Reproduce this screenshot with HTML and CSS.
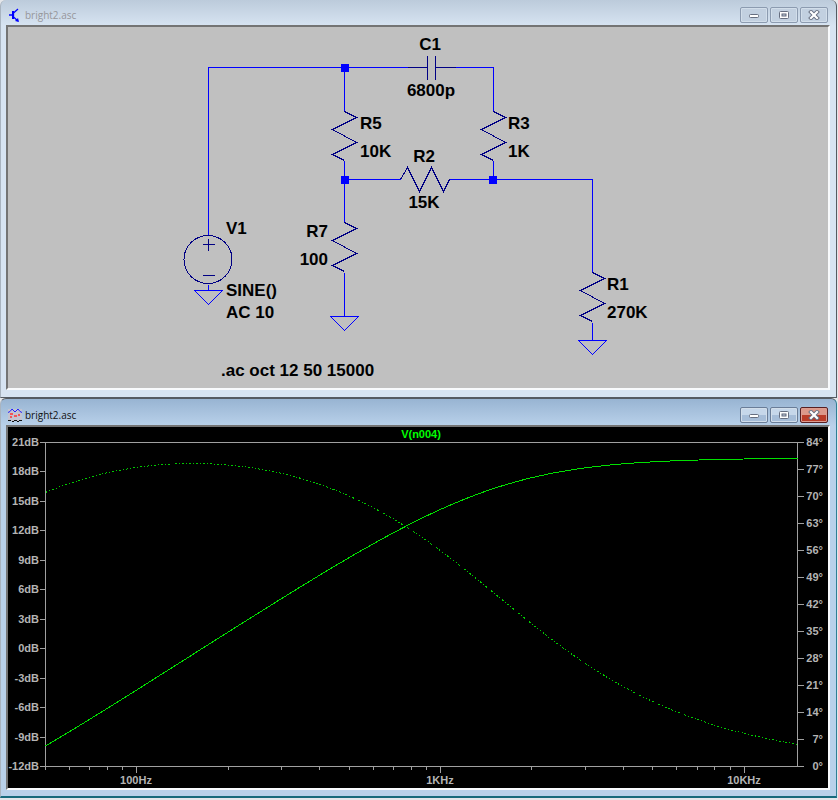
FILE: index.html
```html
<!DOCTYPE html>
<html lang="en">
<head>
<meta charset="utf-8">
<title>bright2.asc</title>
<link rel="stylesheet" href="styles.css">
</head>
<body>
<svg class="defs" aria-hidden="true">
  <defs>
    <symbol id="min" viewBox="0 0 12 10"><rect x="1.500" y="4.500" width="9" height="3" rx="1" fill="#fff" stroke="#666e80"/></symbol>
    <symbol id="max" viewBox="0 0 12 10"><rect x="1.500" y="1.500" width="9" height="7" rx="1" fill="#fff" stroke="#666e80"/><rect x="4" y="4" width="4" height="2" fill="#c8d6e6" stroke="#5c6376"/></symbol>
    <symbol id="close" viewBox="0 0 12 10"><path d="M3 2l6 6M9 2L3 8" stroke="#666e80" stroke-width="4" stroke-linecap="square"/><path d="M3 2l6 6M9 2L3 8" stroke="#fff" stroke-width="2.200" stroke-linecap="square"/></symbol>
    <path id="res" d="M0 0L12 6L-12 18L12 31L-12 43L0 49"/>
    <path id="gnd" d="M-14 0H14L0 14Z"/>
  </defs>
</svg>

<main>
  <section class="window">
    <header class="titlebar">
      <svg class="app-icon" viewBox="0 0 14 14" aria-hidden="true"><path d="M1 7h4M10 1L5.500 5v4L10 13" fill="none" stroke="#00f" stroke-width="1.300"/><path d="M5 3v8" stroke="#00f" stroke-width="2"/><path d="M11 14l-4-1 3-3z" fill="#00f"/></svg>
      <h1 class="title">bright2.asc</h1>
      <button class="ctl" type="button" aria-label="Minimize"><svg><use href="#min"/></svg></button>
      <button class="ctl" type="button" aria-label="Maximize"><svg><use href="#max"/></svg></button>
      <button class="ctl" type="button" aria-label="Close"><svg><use href="#close"/></svg></button>
    </header>
    <div class="client">
      <svg class="view schematic" viewBox="8 27 820 361">
        <g transform="translate(.5 .5)">
          <g class="wire">
            <path d="M208 235V67H412M450 67H493V111M344 67V111M344 160V222M344 272V316M344 179H400M449 179H592V272M493 160V179M592 322V340M208 284V290"/>
            <use href="#gnd" x="208" y="290"/><use href="#gnd" x="344" y="316"/><use href="#gnd" x="592" y="340"/>
          </g>
          <g class="part">
            <use href="#res" x="344" y="111"/><use href="#res" x="493" y="111"/>
            <use href="#res" x="344" y="222"/><use href="#res" x="592" y="272"/>
            <path d="M400 179L407 167L419 191L431 167L443 191L449 179"/>
            <path d="M407 67H427M435 67H455M427 55V79M435 55V79"/>
            <circle cx="207.500" cy="259" r="24"/>
            <path d="M202 244H214M208 238V250M202 275H214"/>
          </g>
        </g>
        <g class="node"><rect x="341" y="64" width="8" height="8"/><rect x="341" y="176" width="8" height="8"/><rect x="489" y="176" width="8" height="8"/></g>
        <g class="label">
          <text class="mid" x="430" y="50">C1</text><text class="mid" x="431" y="96">6800p</text>
          <text x="360" y="129">R5</text><text x="360" y="157">10K</text>
          <text x="508" y="129">R3</text><text x="508" y="157">1K</text>
          <text class="mid" x="424" y="162">R2</text><text class="mid" x="424" y="208">15K</text>
          <text class="end" x="328" y="237">R7</text><text class="end" x="328" y="265">100</text>
          <text x="226" y="234">V1</text><text x="226" y="296">SINE()</text><text x="226" y="318">AC 10</text>
          <text x="607" y="290">R1</text><text x="607" y="318">270K</text>
          <text x="221" y="376">.ac oct 12 50 15000</text>
        </g>
      </svg>
    </div>
  </section>

  <section class="window active">
    <header class="titlebar">
      <svg class="app-icon" viewBox="0 0 14 14" aria-hidden="true"><rect y="1" width="14" height="12" fill="#c4c4d0"/><path d="M0 4.500l2-1 2-2.500 3 3 3-3 2 2.500 2 1" fill="none" stroke="#22f"/><path d="M2 6h3M6 8h3M10 7h2M2 9h2" stroke="#f33" stroke-width="1.500"/><path d="M0 12.500h3M4 13.500h2M6 12.500h3M9 13.500h2M11 12.500h3" fill="none" stroke="#111"/></svg>
      <h1 class="title">bright2.asc</h1>
      <button class="ctl" type="button" aria-label="Minimize"><svg><use href="#min"/></svg></button>
      <button class="ctl" type="button" aria-label="Maximize"><svg><use href="#max"/></svg></button>
      <button class="ctl close" type="button" aria-label="Close"><svg><use href="#close"/></svg></button>
    </header>
    <div class="client">
      <svg class="view plot" viewBox="8 427 820 361">
        <text class="trace-name" x="421" y="438">V(n004)</text>
        <g transform="translate(.5 .5)">
          <path class="axis" id="axis"/>
          <path class="phase" id="phase"/>
          <path class="gain" id="gain"/>
        </g>
        <g id="ticks" class="ticks"></g>
      </svg>
    </div>
  </section>
</main>
<script src="plot.js"></script>
</body>
</html>
```

FILE: styles.css
```css
* { box-sizing: border-box; }

body {
  margin: 0;
  background: #e4e6ea;
  font-family: "Open Sans", sans-serif;
}

.defs { position: absolute; width: 0; height: 0; }

.window {
  margin-right: 1px;
  padding: 0 6px 7px 5px;
  border: 1px solid #555b62;
  border-width: 0 1px 1px;
  border-left-color: #a9b4c0;
  border-radius: 6px 6px 0 0;
  background: linear-gradient(#bccbdb, #d7e4f2 26px);
}

.window.active {
  padding-bottom: 6px;
  border-top-width: 1px;
  border-right-color: #2f7f95;
  border-bottom: 2px solid #176a7c;
  background: linear-gradient(#98b4d2, #b9d1ea 27px);
}

.titlebar {
  display: flex;
  align-items: center;
  gap: 2px;
  height: 25px;
  padding: 5px 2px 0 2px;
}

.active .titlebar { height: 26px; }

.app-icon { width: 14px; height: 14px; }

.title {
  flex: 1;
  margin: 0;
  padding-left: 1px;
  font-size: 10px;
  font-weight: 400;
  line-height: 14px;
  color: #96969a;
}

.active .title { color: #111; }

.ctl {
  display: grid;
  place-items: center;
  width: 28px;
  height: 16px;
  padding: 0;
  border: 1px solid #8c9bb0;
  border-radius: 2px;
  background: #c2d0e0;
  box-shadow: inset 0 0 0 1px #d2deea;
}

.ctl svg { display: block; width: 12px; height: 10px; }

.active .ctl {
  border-color: #6a7d98;
  background: linear-gradient(#c6d7ea 50%, #a6bdd8 50%);
}

.active .ctl.close {
  border-color: #571f22;
  background: linear-gradient(#dc988a 50%, #b93c28 50%);
  box-shadow: inset 0 0 0 1px #dd9c90;
}

.client {
  border: 2px solid;
  border-color: #747474 #f8fafc #f8fafc #747474;
}

.view { display: block; width: 100%; height: auto; }

.schematic { background: #c0c0c0; }
.plot { background: #000; }

.wire, .part { fill: none; shape-rendering: crispEdges; }
.wire { stroke: #00f; }
.part { stroke: #000084; }
.node { fill: #00f; }

.label, .plot text { font-family: "Liberation Sans", Arial, sans-serif; font-weight: 700; }
.label { font-size: 17px; fill: #000; }
.mid, .trace-name, .freq { text-anchor: middle; }
.end, .level { text-anchor: end; }

.plot text { font-size: 11px; }
.trace-name { fill: #0f0; }
.ticks { fill: #b4b4b4; }

.axis, .phase, .gain { fill: none; shape-rendering: crispEdges; }
.axis { stroke: #a0a0a0; }
.gain { stroke: #00e000; }
.phase { stroke: #00c800; stroke-dasharray: 2 2 1 2; }
```

FILE: plot.js
```js
// Plot area and sweep range.
const box = { left: 45, top: 442, right: 797, bottom: 766 };
const sweep = { from: 50, to: 15000 };
const width = box.right - box.left;
const height = box.bottom - box.top;

const xOf = f => box.left + width * Math.log(f / sweep.from) / Math.log(sweep.to / sweep.from);
const yOfGain = db => box.bottom - height * (db + 12) / 33;
const yOfPhase = deg => box.bottom - height * deg / 84;

// Node n004: fed by C1 + R3 from the source, and by R2 from the R5/R7 divider.
function response(f) {
  const xc = 1 / (2 * Math.PI * f * 6.8e-9);
  const d = 1000 * 1000 + xc * xc;
  const g = 1000 / d, b = xc / d;
  const divider = 100 / 10100;
  const g2 = 1 / (15000 + 10000 * divider);
  const nr = 10 * (g + g2 * divider), ni = 10 * b;
  const dr = g + g2 + 1 / 270000, di = b;
  return {
    db: 20 * Math.log10(Math.hypot(nr, ni) / Math.hypot(dr, di)),
    deg: (Math.atan2(ni, nr) - Math.atan2(di, dr)) * 180 / Math.PI
  };
}

const gain = [], phase = [];
for (let i = 0; i <= 99; i++) {
  const f = sweep.from * Math.pow(sweep.to / sweep.from, i / 99);
  const r = response(f);
  gain.push(xOf(f).toFixed(1) + " " + yOfGain(r.db).toFixed(1));
  phase.push(xOf(f).toFixed(1) + " " + yOfPhase(r.deg).toFixed(1));
}
document.getElementById("gain").setAttribute("d", "M" + gain.join("L"));
document.getElementById("phase").setAttribute("d", "M" + phase.join("L"));

const ticks = document.getElementById("ticks");
function label(kind, x, y, text) {
  const t = document.createElementNS("http://www.w3.org/2000/svg", "text");
  t.setAttribute("class", kind);
  t.setAttribute("x", Math.round(x));
  t.setAttribute("y", Math.round(y));
  t.textContent = text;
  ticks.append(t);
}

let d = `M${box.left} ${box.top}H${box.right}V${box.bottom}H${box.left}Z`;
for (let db = -12; db <= 21; db += 3) {
  const y = Math.round(yOfGain(db));
  d += `M${box.left - 6} ${y}H${box.left}`;
  label("level", box.left - 6, y + 4, db + "dB");
}
for (let deg = 0; deg <= 84; deg += 7) {
  const y = Math.round(yOfPhase(deg));
  d += `M${box.right} ${y}H${box.right + 6}`;
  label("level", box.right + 26, y + 4, deg + "°");
}
for (const decade of [10, 100, 1000, 10000]) {
  for (let n = 1; n < 10; n++) {
    const f = n * decade;
    if (f < sweep.from || f > sweep.to) continue;
    const x = Math.round(xOf(f));
    d += `M${x} ${box.bottom}v${n === 1 ? 6 : 3}`;
    if (n === 1) label("freq", x, box.bottom + 18, f < 1000 ? f + "Hz" : f / 1000 + "KHz");
  }
}
document.getElementById("axis").setAttribute("d", d);
```
